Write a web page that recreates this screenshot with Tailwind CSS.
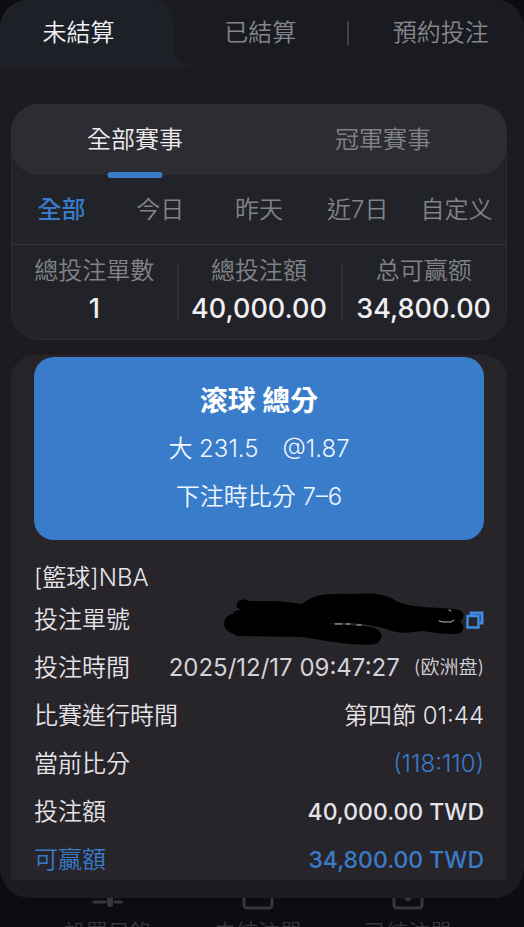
<!DOCTYPE html>
<html lang="zh-Hant">
<head>
<meta charset="utf-8">
<meta name="viewport" content="width=device-width, initial-scale=1">
<title>未結算注單</title>
<script src="https://cdn.jsdelivr.net/npm/@tailwindcss/browser@4"></script>
</head>
<body class="h-screen overflow-hidden bg-[#0e0c12] font-['Inter','Noto_Sans_CJK_TC','Noto_Sans_CJK_SC',sans-serif] text-2xl font-[350] leading-9 text-[#e4e3e8]">
<main class="relative z-10 overflow-hidden rounded-t-[28px] rounded-b-[30px] bg-[#1e1b20] pb-[18px]">
  <nav class="flex h-[68px] bg-[#1a1b20] text-[#85868b]" aria-label="注單狀態">
    <button class="relative w-[33%] rounded-tr-[20px] bg-[#1e2028] pr-4 pb-0.5 text-[#f0f0f4]">未結算
      <svg class="absolute bottom-0 left-full h-6 w-6" viewBox="0 0 24 24" aria-hidden="true"><path d="M0 0C0 12 6 19 16 20L18 24H0Z" fill="#1e2028"/></svg>
    </button>
    <button class="flex-1 px-1 pb-0.5">已結算</button>
    <span class="mt-[21px] h-6 w-0.5 bg-[#414247]"></span>
    <button class="flex-1 pl-2 pb-0.5">預約投注</button>
  </nav>

  <div class="mt-9 mr-[17px] ml-[11px]">
    <section class="rounded-[28px] border border-[#2b2c31] bg-[#222328] text-[#828388]">
      <div class="-mx-px -mt-px flex h-[71px] rounded-[28px] bg-[#2c2c32]">
        <button class="relative flex-1 text-[#ececf0]">全部賽事
          <span class="absolute -bottom-[3px] left-1/2 h-1.5 w-[55px] -translate-x-1/2 rounded-full bg-[#397cca]"></span>
        </button>
        <button class="flex-1">冠軍賽事</button>
      </div>
      <div class="flex h-[70px] border-b border-[#34353a]">
        <button class="flex-1 font-medium text-[#397cca]">全部</button>
        <button class="flex-1">今日</button>
        <button class="flex-1">昨天</button>
        <button class="flex-1">近7日</button>
        <button class="flex-1 whitespace-nowrap font-['Inter','Noto_Sans_CJK_SC',sans-serif]">自定义</button>
      </div>
      <dl class="relative grid grid-cols-3 pt-2 pb-3 text-center whitespace-nowrap">
        <div><dt>總投注單數</dt><dd class="h-[38px] text-[27px] leading-10 font-medium text-[#f0f0f3]">1</dd></div>
        <div><dt>總投注額</dt><dd class="h-[38px] text-[27px] leading-10 font-medium text-[#f0f0f3]">40,000.00</dd></div>
        <div><dt class="font-['Inter','Noto_Sans_CJK_SC',sans-serif]">总可赢额</dt><dd class="h-[38px] text-[27px] leading-10 font-medium text-[#f0f0f3]">34,800.00</dd></div>
        <span class="absolute top-5 left-1/3 h-[54px] w-0.5 bg-[#303136]"></span>
        <span class="absolute top-5 left-2/3 h-[54px] w-0.5 bg-[#303136]"></span>
      </dl>
    </section>

    <article class="mt-[15px] flow-root rounded-t-[24px] bg-[#27242a] px-[23px] pt-0.5">
      <header class="rounded-[20px] bg-[#397cca] pt-5 pb-[19px] text-center leading-12 text-[#eef6ff]">
        <h1 class="text-[28px] font-bold text-white">滚球 總分</h1>
        <p>大 231.5<span class="ml-6">@1.87</span></p>
        <p>下注時比分 7–6</p>
      </header>
      <h2 class="mt-5">[籃球]NBA</h2>
      <dl class="-mb-1 leading-12 whitespace-nowrap">
        <div class="flex justify-between">
          <dt>投注單號</dt>
          <dd class="relative">
            <button class="block pt-[15px]" aria-label="複製">
              <svg class="h-[18px] w-[18px]" viewBox="0 0 18 18" fill="none" stroke="#3f8de2" stroke-width="2"><path d="M5 4V2H16V12H13.500" stroke-width="3"/><path d="M1.500 5H12.500V16.500H1.500Z" stroke-width="2.400"/></svg>
            </button>
            <svg class="absolute top-0 right-5 h-12 w-[240px] overflow-visible" viewBox="0 0 240 48" fill="none" stroke-linecap="round" stroke-linejoin="round" aria-hidden="true">
              <path d="M17 4C11 6 11 12 17 14C12 14 10 16 9 18C2 19 0 24 0 29C2 37 8 36 13 40L78 41C103 45 135 51 152 48C160 43 160 35 148 31L103 27C132 26 147 29 163 33C174 39 188 36 199 35C216 38 229 39 236 37C241 33 240 29 236 26C241 22 241 16 235 14C216 10 193 14 172 5C160-3 149-3 125-2C99-3 87 0 78 8C56 4 41 5 26 5C22 4 20 3 17 4Z" fill="#000"/>
              <path d="M111 28H118M122 28H126M133 29H137M215 25L219 26L227 26L230 24M225 14L227 15" stroke="#c2c2c2" stroke-width="1"/>
            </svg>
          </dd>
        </div>
        <div class="flex justify-between"><dt>投注時間</dt><dd class="flex gap-3.5 font-normal text-[#d3d2d7]">2025/12/17 09:47:27<small class="font-['Inter','Noto_Sans_CJK_SC',sans-serif] text-[19px] leading-12 font-[350]">(欧洲盘)</small></dd></div>
        <div class="flex justify-between"><dt>比賽進行時間</dt><dd>第四節 01:44</dd></div>
        <div class="flex justify-between"><dt>當前比分</dt><dd class="text-[#397cca]">(118:110)</dd></div>
        <div class="flex justify-between"><dt>投注額</dt><dd class="text-[23px] font-medium">40,000.00 TWD</dd></div>
        <div class="flex justify-between text-[#397cca]"><dt>可贏額</dt><dd class="text-[23px] font-medium">34,800.00 TWD</dd></div>
      </dl>
    </article>
  </div>
</main>

<nav class="-mt-5 flex pr-[41px] pl-[33px] text-[22px] leading-8 text-[#38363b]" aria-label="主選單">
  <a href="#" class="flex flex-1 flex-col items-center gap-1.5"><svg class="h-8 w-8" viewBox="0 0 32 32" fill="none" stroke="currentColor" stroke-width="3" stroke-linecap="round"><path d="M2 8H8M14 8H30M2 24H13M23 24H29M11 5V11M18 21.500V26.500"/><path d="M18 22V26" stroke-width="6"/></svg>設置目錄</a>
  <a href="#" class="flex flex-1 flex-col items-center gap-1.5"><svg class="h-8 w-8" viewBox="0 0 32 32" fill="none" stroke="currentColor" stroke-width="3"><rect x="2" y="3" width="28" height="27" rx="3"/></svg>未結注單</a>
  <a href="#" class="flex flex-1 flex-col items-center gap-1.5"><svg class="h-8 w-8" viewBox="0 0 32 32" fill="none" stroke="currentColor" stroke-width="3"><rect x="2" y="3" width="28" height="27" rx="3"/><path d="M12 18L16 22L20 18"/></svg>已結注單</a>
</nav>
</body>
</html>
